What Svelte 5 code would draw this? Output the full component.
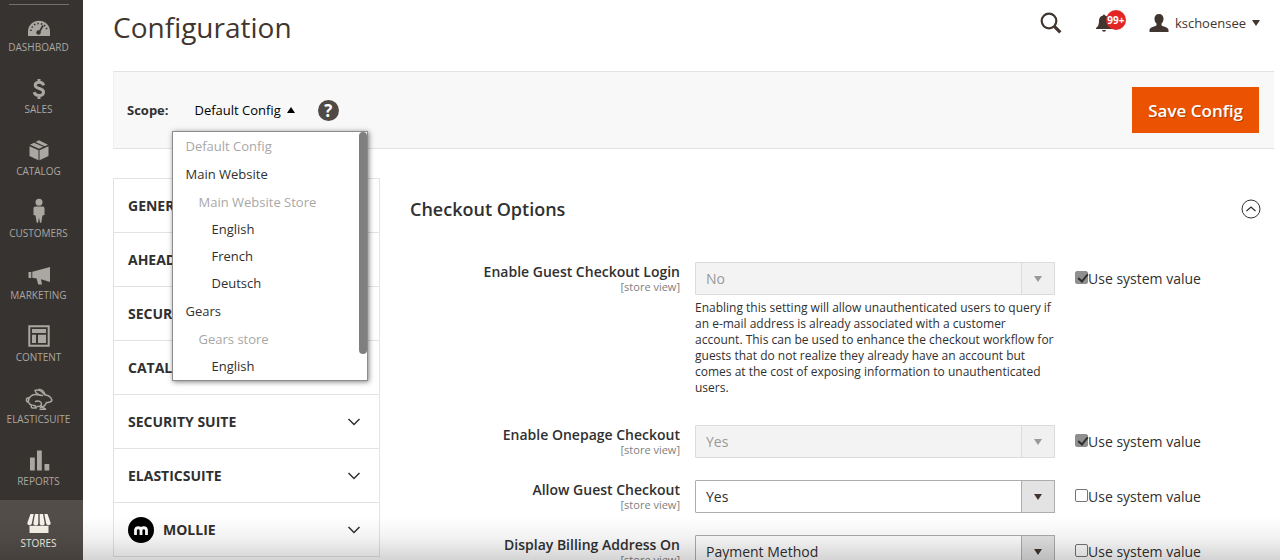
<script>
  const menu = ['Dashboard', 'Sales', 'Catalog', 'Customers', 'Marketing', 'Content', 'Elasticsuite', 'Reports', 'Stores'];

  const scopes = [
    { label: 'Default Config', level: 0, disabled: true },
    { label: 'Main Website', level: 0, head: true },
    { label: 'Main Website Store', level: 1, disabled: true, head: true },
    { label: 'English', level: 2 },
    { label: 'French', level: 2 },
    { label: 'Deutsch', level: 2 },
    { label: 'Gears', level: 0, head: true },
    { label: 'Gears store', level: 1, disabled: true, head: true },
    { label: 'English', level: 2 }
  ];

  const sections = ['General', 'Ahead', 'Security', 'Catalog', 'Security Suite', 'Elasticsuite', 'Mollie'];

  let fields = $state([
    {
      id: 'guest-login',
      label: 'Enable Guest Checkout Login',
      value: 'No',
      options: ['Yes', 'No'],
      system: true,
      note: 'Enabling this setting will allow unauthenticated users to query if an e-mail address is already associated with a customer account. This can be used to enhance the checkout workflow for guests that do not realize they already have an account but comes at the cost of exposing information to unauthenticated users.'
    },
    { id: 'onepage', label: 'Enable Onepage Checkout', value: 'Yes', options: ['Yes', 'No'], system: true },
    { id: 'guest', label: 'Allow Guest Checkout', value: 'Yes', options: ['Yes', 'No'], system: false },
    {
      id: 'billing',
      label: 'Display Billing Address On',
      value: 'Payment Method',
      options: ['Payment Method', 'Payment Page'],
      system: false
    }
  ]);

  let scopeOpen = $state(true);
  let sectionOpen = $state(true);
  let scope = $state('Default Config');

  function pickScope(item) {
    scope = item.label;
    scopeOpen = false;
  }
</script>

{#snippet menuIcon(name)}
  <svg class="menu-icon" viewBox="0 0 28 24" fill="currentColor" aria-hidden="true">
    {#if name === 'Dashboard'}
      <path d="M3 21v-4.500a11 10.800 0 0 1 22 0V21z" />
      <g fill="none" stroke="#373330">
        <path d="M6 16a8 7.500 0 0 1 16 0" stroke-width="1.600" stroke-dasharray="1.400 2.100" />
        <path d="M14 17.500l4-7" stroke-width="1.600" />
      </g>
      <circle cx="13.500" cy="17.500" r="2.200" fill="#373330" />
    {:else if name === 'Sales'}
      <path
        d="M18.600 8.300C18 6.200 16.500 5.300 14.200 5.300c-2.500 0-4 1.200-4 3 0 4.200 8.300 2.300 8.300 6.700 0 2.100-1.700 3.500-4.400 3.500-2.600 0-4.300-1.100-4.900-3.400M14 2v4M14 18v4"
        fill="none"
        stroke="currentColor"
        stroke-width="3"
      />
    {:else if name === 'Catalog'}
      <path d="M4.500 7.300l9 4v10l-9-4.200zM23.500 7.300l-9 4v10l9-4.200z" />
      <path d="M5 5.700L9 3.700l9.300 4.100-4.300 2zM10.500 3L14 1.200l9 4.500-3.300 1.500z" />
    {:else if name === 'Customers'}
      <circle cx="14" cy="1.200" r="3.500" />
      <path d="M10.500 5.500h7c1.300 0 2 .8 2 2V14l-2 .5-1.200 7-1.300.5-1-5.500-1 5.500-1.300-.5-1.200-7-2-.5V7.500c0-1.200.7-2 2-2z" />
    {:else if name === 'Marketing'}
      <path d="M3.500 9h2.800v6H3.500zM7.300 8.700L25 4v15l-9-2.700 1 5.200h-3.800l-1.600-6-4.300-.7z" />
    {:else if name === 'Content'}
      <path d="M4.300 1.300h19.400v19.400H4.300z" fill="none" stroke="currentColor" stroke-width="2" />
      <path d="M7 4h14v4H7zM7 9.800h4V18H7zM13 9.800h8V18h-8z" />
    {:else if name === 'Elasticsuite'}
      <g fill="none" stroke="currentColor" stroke-width="1.500" stroke-linejoin="round" stroke-linecap="round">
        <path d="M3.500 10.800c-2.600-.2-3 4-.2 4.200 0-4.500 3.200-7.600 7.200-7.600 3 0 4.500 1.400 7 1-3.500-.4-6.800-2.200-7.500-5 3-1.300 7 .8 9.500 4.200" />
        <path d="M14 2.500c2.600-.6 5.200 2.600 6.500 5.500 3.300.3 5.700 2.700 6.500 5.300-.8 1.900-3 2.400-5.500 2.200-1 2.600-3.200 4.500-6 5" />
        <path d="M3.300 15c.7 1.700 2 2.700 3.700 3.200-1.200.7-1 2.800.6 2.900h3.600c0-1.600-1.400-2.600-2.900-2.800M10.500 14.500c3-1.600 6 .5 6 2.500 0 1.500-2 2.500-4 2.600M15.500 18.700l5 3.500h-5.500" />
      </g>
    {:else if name === 'Reports'}
      <path d="M5 8.500h4.800v13H5zM12 1.500h4.800v20H12zM19.500 15h4.800v6.500h-4.800z" />
    {:else}
      <path d="M4.500 14.800h19V22h-19z" />
      <path d="M5.500 3h3.200L6.800 12.500a2.100 1.800 0 0 1-4.500-.5zM10 3h3.300v9.500a2.200 1.800 0 0 1-5 0zM14.700 3H18l1.700 9.500a2.200 1.800 0 0 1-5 0zM19.300 3h3.200L25.700 12a2.100 1.800 0 0 1-4.500.5z" />
    {/if}
  </svg>
{/snippet}

<div class="page">
  <nav class="sidebar" aria-label="Main menu">
    {#each menu as name}
      <a href="#{name.toLowerCase()}" class:active={name === 'Stores'}>
        {@render menuIcon(name)}
        <span>{name}</span>
      </a>
    {/each}
  </nav>

  <main>
    <header>
      <h1>Configuration</h1>
      <div class="tools">
        <button class="search" aria-label="Search">
          <svg viewBox="0 0 22 22" fill="none" stroke="currentColor" aria-hidden="true">
            <circle cx="9" cy="9" r="7.300" stroke-width="2.200" />
            <path d="M14.300 14.300l6 6" stroke-width="3.200" />
          </svg>
        </button>
        <button class="bell" aria-label="Notifications">
          <svg viewBox="0 0 16 18" fill="currentColor" aria-hidden="true">
            <path d="M7 1.500a1 1 0 0 1 2 0c3 .6 4 2.800 4 5.500 0 3.500.8 5.500 3 7v1H0v-1c2.200-1.500 3-3.500 3-7 0-2.700 1-4.900 4-5.500zM6 16h4a2 1.700 0 0 1-4 0z" />
          </svg>
          <span class="badge">99+</span>
        </button>
        <button class="account">
          <svg viewBox="0 0 20 18" fill="currentColor" aria-hidden="true">
            <path d="M10 0c3 0 4.700 2 4.500 5-.1 2-.9 3.500-2 4.500v1.700c1 1.600 7 1.500 7 4.800v2H.5v-2c0-3.300 6-3.200 7-4.800V9.500c-1.100-1-1.900-2.500-2-4.500C5.300 2 7 0 10 0z" />
          </svg>
          <span>kschoensee</span>
          <i class="caret"></i>
        </button>
      </div>
    </header>

    <div class="scope-bar">
      <span class="scope-label" id="scope-label">Scope:</span>
      <div class="scope">
        <button
          class="scope-toggle"
          aria-labelledby="scope-label"
          aria-expanded={scopeOpen}
          onclick={() => (scopeOpen = !scopeOpen)}
        >
          {scope}
          <i class="caret" class:up={scopeOpen}></i>
        </button>
        {#if scopeOpen}
          <div class="scope-menu">
            <ul>
              {#each scopes as item}
                <li class:head={item.head}>
                  <button class="level-{item.level}" disabled={item.disabled} onclick={() => pickScope(item)}>
                    {item.label}
                  </button>
                </li>
              {/each}
            </ul>
            <div class="thumb"></div>
          </div>
        {/if}
      </div>
      <button class="help" aria-label="Help">?</button>
      <button class="save">Save Config</button>
    </div>

    <div class="columns">
      <div class="sections">
        {#each sections as section}
          <button class="section">
            {#if section === 'Mollie'}
              <svg class="mollie" viewBox="0 0 26 26" aria-hidden="true">
                <circle cx="13" cy="13" r="13" />
                <path
                  d="M7.500 18v-5a2.800 2.800 0 0 1 5.500 0v5M13 13a2.800 2.800 0 0 1 5.500 0v5"
                  fill="none"
                  stroke="#fff"
                  stroke-width="2.800"
                />
              </svg>
            {/if}
            <span>{section}</span>
            <svg class="chevron" viewBox="0 0 14 14" fill="none" stroke="currentColor" aria-hidden="true">
              <path d="M1.500 4l5.500 5.500L12.500 4" stroke-width="1.500" />
            </svg>
          </button>
        {/each}
      </div>

      <section class="content">
        <div class="content-head">
          <h2>Checkout Options</h2>
          <button aria-label="Toggle section" aria-expanded={sectionOpen} onclick={() => (sectionOpen = !sectionOpen)}>
            <svg viewBox="0 0 20 20" fill="none" stroke="currentColor" aria-hidden="true">
              <circle cx="10" cy="10" r="9" />
              <path d="M5.500 12L10 8l4.500 4" stroke-width="1.300" />
            </svg>
          </button>
        </div>

        {#if sectionOpen}
          <form>
            {#each fields as field (field.id)}
              <div class="field">
                <label class="name" for={field.id}>
                  {field.label}
                  <small>[store view]</small>
                </label>
                <div class="control">
                  <div class="select" class:disabled={field.system}>
                    <select id={field.id} bind:value={field.value} disabled={field.system}>
                      {#each field.options as option}
                        <option>{option}</option>
                      {/each}
                    </select>
                    <span class="arrow"><i class="caret"></i></span>
                  </div>
                  {#if field.note}
                    <p>{field.note}</p>
                  {/if}
                </div>
                <label class="system">
                  <input type="checkbox" bind:checked={field.system} />
                  <span>Use system value</span>
                </label>
              </div>
            {/each}
          </form>
        {/if}
      </section>
    </div>
  </main>
  <div class="fade"></div>
</div>

<style>
  :global(body) {
    margin: 0;
  }

  .page {
    position: relative;
    display: flex;
    height: 100vh;
    overflow: hidden;
    background: #fff;
    color: #303030;
    font-family: 'Open Sans', 'Noto Sans', sans-serif;
    font-size: 14px;
  }

  .page :global(*) {
    box-sizing: border-box;
  }

  button {
    padding: 0;
    border: 0;
    background: none;
    color: inherit;
    font: inherit;
    cursor: pointer;
  }

  .caret {
    border: 4px solid transparent;
    border-top: 6px solid currentColor;
    border-bottom: 0;
  }

  .caret.up {
    border-top: 0;
    border-bottom: 6px solid currentColor;
  }

  /* Left menu */
  .sidebar {
    flex: 0 0 83px;
    padding-top: 4px;
    background: #373330;
  }

  .sidebar::before {
    content: '';
    display: block;
    height: 1px;
    margin: 0 14px -1px 9px;
    background: #736f6b;
  }

  .sidebar a {
    display: flex;
    flex-direction: column;
    align-items: center;
    height: 62px;
    padding: 11px 6px 0 0;
    color: #aaa6a0;
    font-size: 10px;
    line-height: 16px;
    text-decoration: none;
    text-transform: uppercase;
  }

  .sidebar a.active {
    background: #524d49;
    color: #f7f3eb;
  }

  .menu-icon {
    flex: none;
    width: 28px;
    height: 24px;
    overflow: visible;
  }

  /* Title row */
  main {
    flex: 1;
    min-width: 0;
    padding: 0 6px 0 30px;
  }

  header {
    display: flex;
    justify-content: space-between;
    height: 71px;
    padding-right: 14px;
  }

  h1 {
    margin: 5px 0 0;
    color: #41362f;
    font-size: 28px;
    font-weight: 400;
    line-height: 44px;
  }

  .tools {
    display: flex;
    align-items: center;
    height: 46px;
    color: #41362f;
  }

  .tools svg {
    display: block;
  }

  .search svg {
    width: 22px;
    height: 22px;
  }

  .bell {
    display: flex;
    margin: 0 23px 0 34px;
  }

  .bell svg {
    width: 16px;
    height: 18px;
  }

  .badge {
    width: 20px;
    height: 20px;
    margin: -4px 0 0 -6px;
    border-radius: 10px;
    background: #e22626;
    color: #fff;
    font-size: 10px;
    font-weight: 700;
    line-height: 20px;
    text-align: center;
    white-space: nowrap;
  }

  .account {
    display: flex;
    align-items: center;
    gap: 6px;
    font-size: 13px;
  }

  .account svg {
    width: 20px;
    height: 18px;
  }

  /* Scope bar */
  .scope-bar {
    display: flex;
    align-items: center;
    height: 78px;
    padding: 0 15px 0 13px;
    border: 1px solid #e3e3e3;
    border-right: 0;
    border-left-color: #f0f0f0;
    background: #f8f8f8;
  }

  .scope-label {
    font-size: 13px;
    font-weight: 700;
  }

  .scope {
    position: relative;
    margin: 0 23px 0 26px;
  }

  .scope-toggle {
    display: flex;
    align-items: center;
    gap: 6px;
    color: #000;
    font-size: 13px;
  }

  .scope-menu {
    position: absolute;
    top: 30px;
    left: -23px;
    z-index: 2;
    width: 196px;
    height: 250px;
    overflow: hidden;
    border: 1px solid #8c8c8c;
    background: #fff;
    box-shadow: 1px 1px 5px rgba(0, 0, 0, 0.5);
  }

  .scope-menu ul {
    margin: 0;
    padding: 0;
    list-style: none;
  }

  .scope-menu .head {
    margin-top: 1px;
  }

  .scope-menu li button {
    display: block;
    width: 100%;
    height: 27px;
    padding: 0 13px;
    font-size: 13px;
    text-align: left;
  }

  .scope-menu li button:disabled {
    color: #a8a8a8;
    cursor: default;
  }

  .scope-menu li .level-1 {
    padding-left: 26px;
  }

  .scope-menu li .level-2 {
    padding-left: 39px;
  }

  .thumb {
    position: absolute;
    top: 0;
    right: 0;
    width: 8px;
    height: 222px;
    border-radius: 4px;
    background: #7f7f7f;
  }

  .help {
    width: 21px;
    height: 21px;
    border-radius: 50%;
    background: #514943;
    color: #fff;
    font-size: 17px;
    font-weight: 700;
    line-height: 21px;
  }

  .save {
    height: 46px;
    margin-left: auto;
    padding: 0 16px;
    background: #eb5202;
    color: #fff;
    font-size: 17px;
    font-weight: 600;
    text-shadow: 1px 1px 0 rgba(0, 0, 0, 0.25);
  }

  /* Section list and form */
  .columns {
    display: flex;
    align-items: flex-start;
    gap: 30px;
    padding-top: 29px;
  }

  .sections {
    flex: 0 0 267px;
    border: 1px solid #e3e3e3;
    border-top: 0;
  }

  .section {
    display: flex;
    align-items: center;
    gap: 9px;
    width: 100%;
    height: 54px;
    padding: 0 18px 0 14px;
    border-top: 1px solid #e3e3e3;
    font-weight: 700;
    text-transform: uppercase;
  }

  .mollie {
    width: 26px;
    height: 26px;
  }

  .chevron {
    width: 14px;
    height: 14px;
    margin-left: auto;
  }

  .content {
    flex: 1;
    padding: 17px 13px 0 0;
  }

  .content-head {
    display: flex;
    align-items: center;
    justify-content: space-between;
    height: 28px;
  }

  h2 {
    margin: 0;
    font-size: 18px;
    font-weight: 600;
  }

  .content-head svg {
    display: block;
    width: 20px;
    height: 20px;
  }

  form {
    padding: 39px 11px 0 0;
  }

  .field {
    display: grid;
    grid-template-columns: 3fr 4fr 2fr;
    column-gap: 15px;
    margin-bottom: 22px;
  }

  .name {
    font-weight: 600;
    line-height: 19px;
    text-align: right;
  }

  .name small {
    display: block;
    color: #808080;
    font-size: 11px;
    font-weight: 400;
    line-height: 12px;
  }

  .select {
    position: relative;
    height: 33px;
  }

  select {
    width: 100%;
    height: 100%;
    padding: 0 44px 0 10px;
    border: 1px solid #adadad;
    border-radius: 1px;
    appearance: none;
    background: #fff;
    color: #303030;
    font: inherit;
  }

  .arrow {
    position: absolute;
    top: 0;
    right: 0;
    display: flex;
    align-items: center;
    justify-content: center;
    width: 34px;
    height: 100%;
    border: 1px solid #adadad;
    background: #e3e3e3;
    color: #41362f;
    pointer-events: none;
  }

  .disabled select {
    border-color: #dcdcdc;
    background: #f3f3f3;
    color: #999;
    opacity: 1;
  }

  .disabled .arrow {
    border-color: #dcdcdc;
    background: #f0f0f0;
    color: #999;
  }

  .control p {
    margin: 0;
    padding: 5px 0 7px;
    font-size: 12px;
    line-height: 16px;
  }

  .system {
    display: flex;
    align-items: center;
    height: 33px;
    padding-left: 5px;
    white-space: nowrap;
  }

  .system input {
    width: 13px;
    height: 13px;
    margin: 0 0 3px;
    border: 1px solid #767676;
    border-radius: 2px;
    appearance: none;
    background: #fff;
  }

  .system input:checked {
    border-color: #8f8f8f;
    background: #8f8f8f;
  }

  .system input:checked::before {
    content: '';
    display: block;
    width: 4px;
    height: 8px;
    margin: 0 0 0 4px;
    border: solid #303030;
    border-width: 0 2px 2px 0;
    transform: rotate(40deg);
  }

  .fade {
    position: absolute;
    right: 0;
    bottom: 0;
    left: 0;
    height: 44px;
    background: linear-gradient(transparent, rgba(0, 0, 0, 0.05) 50%, rgba(0, 0, 0, 0.17));
    pointer-events: none;
  }
</style>
